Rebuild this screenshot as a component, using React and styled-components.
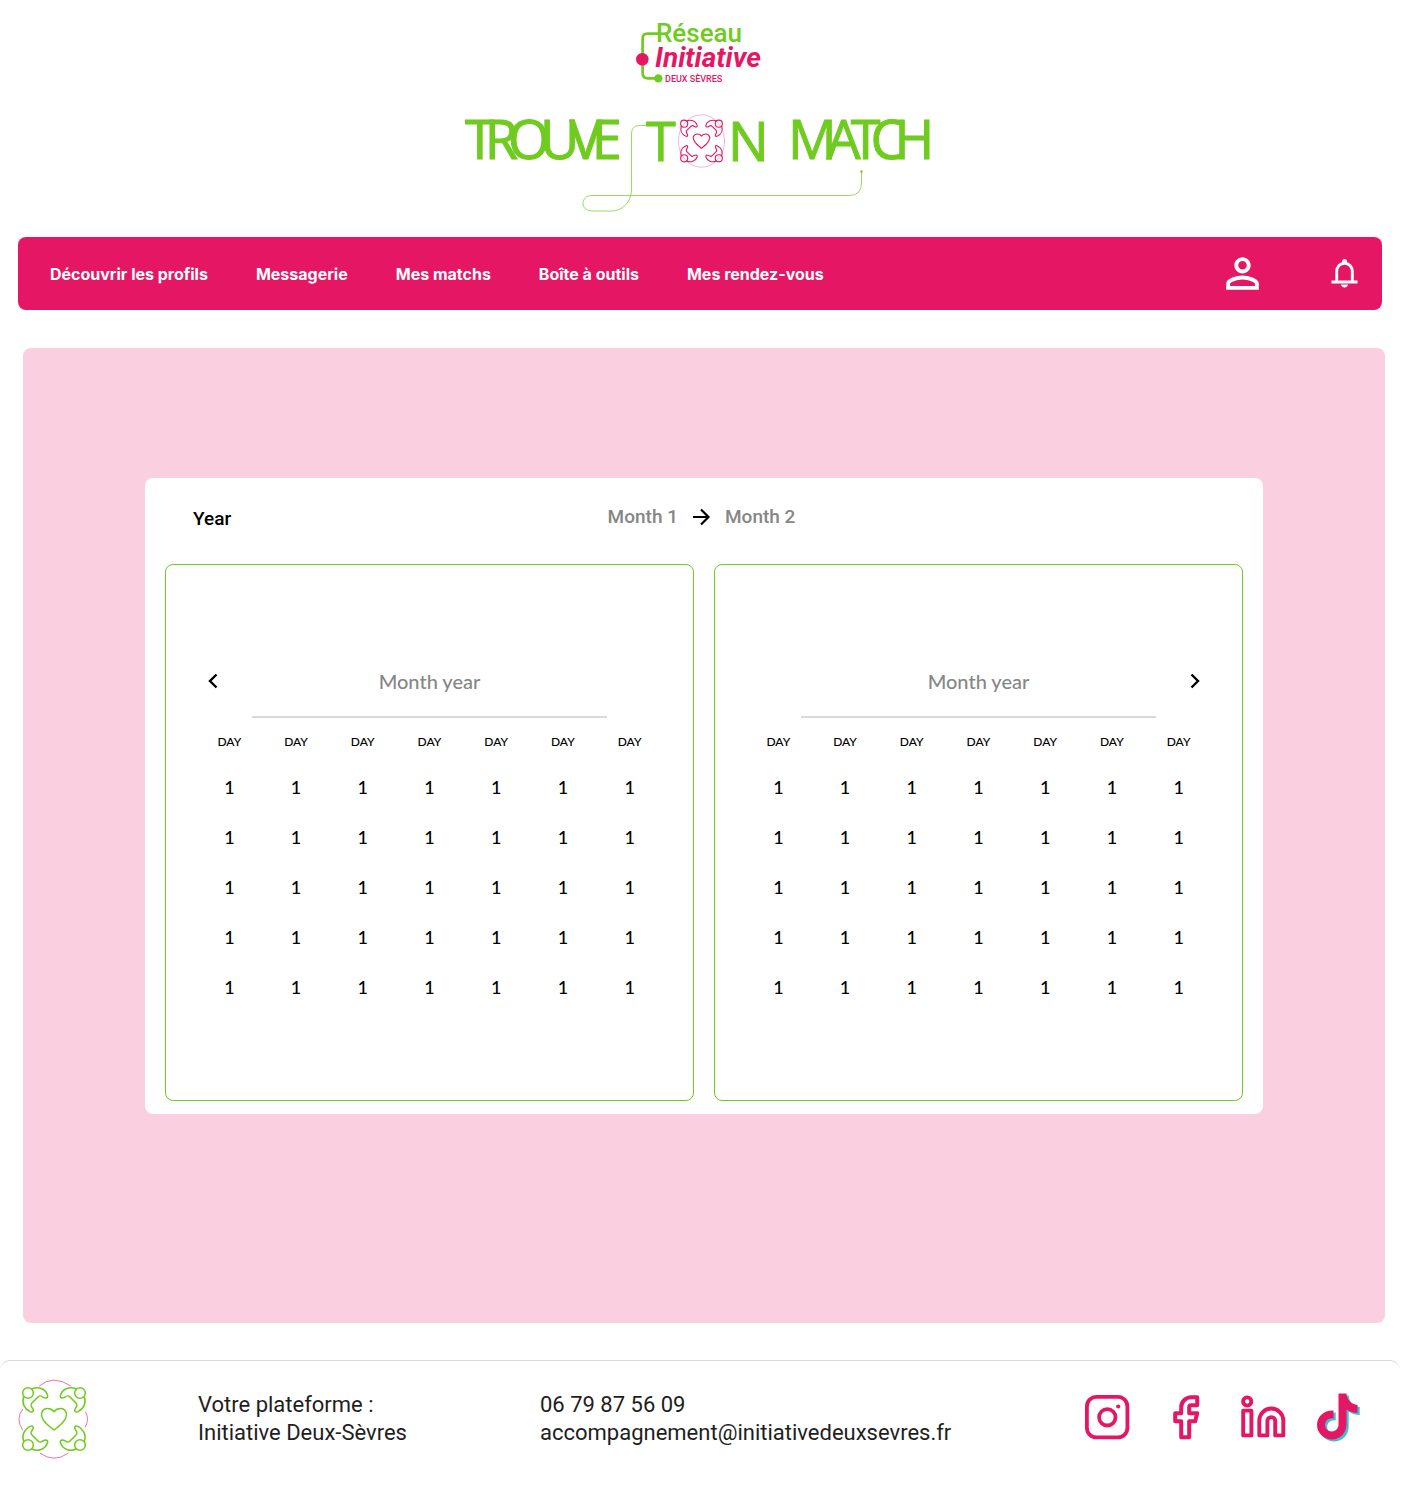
import React from "react";
import styled, { createGlobalStyle } from "styled-components";
import { MdPersonOutline } from "react-icons/md";

const pink = "#e51764";
const green = "#70cb20";
const teal = "#3fbfd0";

const GlobalStyle = createGlobalStyle`
  *, *::before, *::after { box-sizing: border-box; }
  body {
    margin: 0;
    background: #fff;
    color: #000;
    font-family: Roboto, "Liberation Sans", sans-serif;
  }
`;

const Page = styled.div`
  padding-right: 8px;
`;

const Header = styled.header`
  display: flex;
  flex-direction: column;
  align-items: center;
  gap: 26px;
  padding: 20px 0 21px;
`;

const Title = styled.h1`
  margin: 0;
  line-height: 0;
`;

const Drawing = styled.svg`
  display: block;
  overflow: visible;
`;

const Wordmark = styled.text`
  font-family: "Open Sans", "Noto Sans", sans-serif;
  font-size: 54px;
  font-weight: 500;
  letter-spacing: -10px;
  fill: ${green};
  stroke: ${green};
  stroke-width: 1px;
`;

const BrandText = styled.text`
  font-family: Roboto, sans-serif;
  font-size: ${(p) => p.$size}px;
  font-style: ${(p) => (p.$italic ? "italic" : "normal")};
  font-weight: ${(p) => p.$weight};
  fill: ${(p) => p.$color};
`;

const NavBar = styled.nav`
  display: flex;
  align-items: center;
  justify-content: space-between;
  height: 73px;
  margin: 0 18px 38px;
  padding: 0 20px 0 32px;
  border-radius: 8px;
  background: ${pink};
`;

const NavLinks = styled.ul`
  display: flex;
  gap: 48px;
  margin: 0;
  padding: 0;
  list-style: none;
`;

const NavLink = styled.a`
  color: #fff;
  font: 700 16px/24px Inter, sans-serif;
  text-decoration: none;
  white-space: nowrap;
`;

const NavActions = styled.div`
  display: flex;
  align-items: center;
  gap: 58px;
`;

const IconButton = styled.button`
  display: flex;
  align-items: center;
  justify-content: center;
  width: ${(p) => p.$width}px;
  height: ${(p) => p.$height}px;
  padding: 0;
  border: 0;
  background: none;
  color: ${(p) => p.$color || "#000"};
  cursor: pointer;
`;

const Main = styled.main`
  margin: 0 15px 37px 23px;
  padding: 130px 122px 209px;
  border-radius: 8px;
  background: #fad0e0;
`;

const Planner = styled.section`
  padding: 0 20px 13px;
  border-radius: 8px;
  background: #fff;
`;

const PlannerHeader = styled.div`
  display: grid;
  grid-template-columns: 1fr auto 1fr;
  align-items: center;
  height: 86px;
  padding: 0 33px 8px 28px;
`;

const Year = styled.h2`
  margin: 0;
  padding-top: 4px;
  font-size: 19px;
  line-height: 24px;
  font-weight: 500;
`;

const MonthRange = styled.div`
  display: flex;
  align-items: center;
  gap: 15px;
  color: #868686;
  font-size: 19px;
  line-height: 24px;
  font-weight: 500;
`;

const Calendars = styled.div`
  display: grid;
  grid-template-columns: 1fr 1fr;
  gap: 20px;
`;

const CalendarCard = styled.section`
  padding: 83px 30px 88px;
  border: 1px solid ${green};
  border-radius: 8px;
  font-family: Lato, sans-serif;
`;

const CalendarHeader = styled.div`
  display: grid;
  grid-template-columns: 56px 1fr 56px;
  align-items: center;
  margin-bottom: 4px;
`;

const MonthTitle = styled.h3`
  grid-column: 2;
  grid-row: 1;
  margin: 0;
  padding: 21px 0 23px;
  border-bottom: 2px solid #d9d9d9;
  color: #868686;
  font-size: 20px;
  line-height: 24px;
  font-weight: 500;
  text-align: center;
`;

const ArrowSlot = styled.div`
  grid-column: ${(p) => (p.$side === "left" ? 1 : 3)};
  grid-row: 1;
  justify-self: ${(p) => (p.$side === "left" ? "start" : "end")};
  padding-bottom: 4px;
`;

const Days = styled.table`
  width: 100%;
  border-collapse: collapse;
  table-layout: fixed;
  text-align: center;
`;

const DayName = styled.th`
  height: 40px;
  padding: 0 0 2px;
  font-size: 12px;
  font-weight: 500;
`;

const Day = styled.td`
  height: 50px;
  padding: 0;
  font-size: 18px;
  font-weight: 500;
`;

const Footer = styled.footer`
  display: grid;
  grid-template-columns: 179px 342px 1fr auto;
  align-items: center;
  padding: 18px 38px 31px 19px;
  border-top: 1px solid #d9d9d9;
  border-radius: 10px 10px 0 0;
  color: #1e1e1e;
  font-size: 22px;
  line-height: 28px;
`;

const FooterLink = styled.a`
  display: block;
  width: fit-content;
  color: inherit;
  text-decoration: none;
`;

const Contact = styled.address`
  font-style: normal;
`;

const Platform = styled.p`
  margin: 0;
`;

const Socials = styled.div`
  display: flex;
  gap: 29px;
  padding-bottom: 4px;
`;

const SocialLink = styled.a`
  display: block;
  width: 48px;
  height: 48px;
`;

function Person({ flip }) {
  return (
    <g transform={flip}>
      <circle cx="-78" cy="-78" r="16" />
      <path d="M-67-90C-48-99-26-90-20-73C-16-63-25-61-32-65C-41-72-44-70-48-66L-66-48C-71-43-70-40-65-33C-59-25-63-18-72-22C-88-30-98-47-91-67" />
    </g>
  );
}

function Emblem({ people, heart, ring, whole, width = 2.8 }) {
  return (
    <g fill="none" strokeWidth={width} strokeLinecap="round" strokeLinejoin="round">
      {whole ? (
        <ellipse rx="104" ry="118" stroke={ring} strokeOpacity="0.45" strokeWidth="3" />
      ) : (
        <path
          stroke={ring}
          strokeOpacity="0.7"
          strokeWidth="2.6"
          d="M-44-99Q-4-135 51-99M-94-30Q-117 0-94 33M95-21Q107 0 94 24M-41 103Q0 133 42 103"
        />
      )}
      <g stroke={people}>
        <Person flip="scale(1 1)" />
        <Person flip="scale(-1 1)" />
        <Person flip="scale(1 -1)" />
        <Person flip="scale(-1 -1)" />
      </g>
      <path
        stroke={heart}
        d="M0-22C-10-34-31-36-37-18C-41 2-18 19 0 33C18 19 41 2 37-18C31-36 10-34 0-22Z"
      />
    </g>
  );
}

function NetworkLogo() {
  return (
    <Drawing width="128" height="64" viewBox="0 0 128 64" role="img" aria-label="Réseau Initiative Deux Sèvres">
      <path
        d="M23 13.7H11.5Q6.6 13.7 6.6 18.5V53Q6.6 58.4 12 58.4H22"
        fill="none"
        stroke={green}
        strokeWidth="2.7"
      />
      <circle cx="6.3" cy="39.3" r="6.3" fill={pink} />
      <circle cx="22.3" cy="58.4" r="4.2" fill={green} />
      <BrandText x="20" y="22" $size={26} $weight={500} $color={green}>Réseau</BrandText>
      <BrandText x="19" y="47" $size={28} $weight={700} $color={pink} $italic>Initiative</BrandText>
      <BrandText x="29" y="62" $size={9} $weight={500} $color={pink}>DEUX SÈVRES</BrandText>
    </Drawing>
  );
}

function MatchLogo() {
  return (
    <Drawing width="470" height="106" viewBox="0 0 470 106" role="img" aria-label="Trouve ton match">
      <path
        fill="none"
        stroke={green}
        strokeOpacity="0.7"
        d="M182 15.5H174Q166.5 15.5 166.5 24V80C166.5 92 157 101 147 101H127C115 101 115 85.5 127 85.5H384Q396.5 85.5 396.5 73V61"
      />
      <circle cx="396.5" cy="61.5" r="1.2" fill={green} />
      <Wordmark x="0" y="49">TROUVE</Wordmark>
      <Wordmark x="181" y="51">T</Wordmark>
      <g transform="translate(236.5 31) scale(0.222)">
        <Emblem people={pink} heart={pink} ring={pink} whole width={5} />
      </g>
      <Wordmark x="263" y="51">N</Wordmark>
      <Wordmark x="323" y="49">MATCH</Wordmark>
    </Drawing>
  );
}

function BellIcon() {
  return (
    <Drawing width="28" height="30" viewBox="0 0 28 30" aria-hidden="true">
      <path
        d="M5.7 23V12.5C5.7 7.5 9.2 4.3 13.5 4.3S21.3 7.5 21.3 12.5V23"
        fill="none"
        stroke="#fff"
        strokeWidth="2.9"
      />
      <path d="M11 4V2.5A2.5 2.5 0 0 1 16 2.5V4ZM0.5 21.5H26.5V24.5H0.5ZM10 25.5H17Q16.5 28.5 13.5 28.5T10 25.5Z" fill="#fff" />
    </Drawing>
  );
}

function ArrowRight() {
  return (
    <Drawing width="17" height="18" viewBox="0 0 17 18" aria-hidden="true">
      <path d="M0 9H15.5M8 1.5L15.5 9L8 16.5" fill="none" stroke="#000" strokeWidth="2.2" />
    </Drawing>
  );
}

function Chevron({ side }) {
  return (
    <Drawing width="10" height="16" viewBox="0 0 10 16" aria-hidden="true">
      <path
        d={side === "left" ? "M8.5 1.5L2 8L8.5 14.5" : "M1.5 1.5L8 8L1.5 14.5"}
        fill="none"
        stroke="#000"
        strokeWidth="2.4"
      />
    </Drawing>
  );
}

function Instagram() {
  return (
    <Drawing width="48" height="48" viewBox="0 0 48 48" aria-hidden="true">
      <g fill="none" stroke={pink} strokeWidth="3.8">
        <rect x="3.9" y="3.9" width="40.5" height="40.5" rx="9.5" />
        <circle cx="24.3" cy="24.3" r="8.2" />
      </g>
      <circle cx="35.2" cy="13.5" r="2.1" fill={pink} />
    </Drawing>
  );
}

function Facebook() {
  return (
    <Drawing width="48" height="48" viewBox="0 0 48 48" aria-hidden="true">
      <path
        transform="translate(1.2 0.3) scale(2)"
        d="M18 2h-3a5 5 0 0 0-5 5v3H7v4h3v8h4v-8h3l1-4h-4V7a1 1 0 0 1 1-1h3z"
        fill="none"
        stroke={pink}
        strokeWidth="2"
        strokeLinejoin="round"
      />
    </Drawing>
  );
}

function LinkedIn() {
  return (
    <Drawing width="48" height="48" viewBox="0 0 48 48" aria-hidden="true">
      <g fill="none" stroke={pink} strokeWidth="3.9" strokeLinejoin="round">
        <circle cx="10.2" cy="8.5" r="4.1" />
        <rect x="6.2" y="17.6" width="8.2" height="24.8" />
        <path d="M22.3 42.4V27.5A12 12 0 0 1 46.3 27.5V42.4H38.2V28A3.9 3.9 0 0 0 30.4 28V42.4Z" />
      </g>
    </Drawing>
  );
}

function TikTok() {
  const note =
    "M24.5 0.5H32.5C32.8 6.5 37 11.5 43.5 12V20C39.5 20 35.5 18.5 32.5 16.5V31.5C32.5 40 26 46.5 18 46.5S3 40 3 32C3 23.5 10 17 19.5 17.5V25.5C14.5 24.5 11 28 11 32C11 35.5 14 38.5 17.7 38.5C21.5 38.5 24.5 35.5 24.5 31.5Z";
  return (
    <Drawing width="48" height="48" viewBox="0 0 48 48" aria-hidden="true">
      <path d={note} transform="translate(2.2 2)" fill={teal} />
      <path d={note} fill={pink} />
    </Drawing>
  );
}

const navItems = ["Découvrir les profils", "Messagerie", "Mes matchs", "Boîte à outils", "Mes rendez-vous"];
const columns = Array.from({ length: 7 }, (_, i) => i);
const weeks = Array.from({ length: 5 }, (_, i) => i);
const networks = [
  ["Instagram", Instagram],
  ["Facebook", Facebook],
  ["LinkedIn", LinkedIn],
  ["TikTok", TikTok],
];

function Calendar({ side }) {
  return (
    <CalendarCard>
      <CalendarHeader>
        <ArrowSlot $side={side}>
          <IconButton $width={34} $height={34} aria-label={side === "left" ? "Mois précédent" : "Mois suivant"}>
            <Chevron side={side} />
          </IconButton>
        </ArrowSlot>
        <MonthTitle>Month year</MonthTitle>
      </CalendarHeader>
      <Days>
        <thead>
          <tr>{columns.map((c) => <DayName key={c} scope="col">DAY</DayName>)}</tr>
        </thead>
        <tbody>
          {weeks.map((w) => (
            <tr key={w}>{columns.map((c) => <Day key={c}>1</Day>)}</tr>
          ))}
        </tbody>
      </Days>
    </CalendarCard>
  );
}

export default function App() {
  return (
    <Page>
      <GlobalStyle />
      <Header>
        <NetworkLogo />
        <Title><MatchLogo /></Title>
      </Header>
      <NavBar>
        <NavLinks>
          {navItems.map((item) => (
            <li key={item}><NavLink href="#">{item}</NavLink></li>
          ))}
        </NavLinks>
        <NavActions>
          <IconButton $width={56} $height={50} $color="#fff" aria-label="Mon profil">
            <MdPersonOutline size={49} />
          </IconButton>
          <IconButton $width={34} $height={50} $color="#fff" aria-label="Notifications">
            <BellIcon />
          </IconButton>
        </NavActions>
      </NavBar>
      <Main>
        <Planner>
          <PlannerHeader>
            <Year>Year</Year>
            <MonthRange>
              <span>Month 1</span>
              <ArrowRight />
              <span>Month 2</span>
            </MonthRange>
          </PlannerHeader>
          <Calendars>
            <Calendar side="left" />
            <Calendar side="right" />
          </Calendars>
        </Planner>
      </Main>
      <Footer>
        <Drawing width="70" height="80" viewBox="-105 -120 210 240" aria-hidden="true">
          <Emblem people={green} heart={green} ring={pink} width={4.6} />
        </Drawing>
        <Platform>
          Votre plateforme :<br />
          Initiative Deux-Sèvres
        </Platform>
        <Contact>
          <FooterLink href="tel:+33679875609">06 79 87 56 09</FooterLink>
          <FooterLink href="mailto:accompagnement@initiativedeuxsevres.fr">
            accompagnement@initiativedeuxsevres.fr
          </FooterLink>
        </Contact>
        <Socials>
          {networks.map(([name, Icon]) => (
            <SocialLink key={name} href="#" aria-label={name}><Icon /></SocialLink>
          ))}
        </Socials>
      </Footer>
    </Page>
  );
}
